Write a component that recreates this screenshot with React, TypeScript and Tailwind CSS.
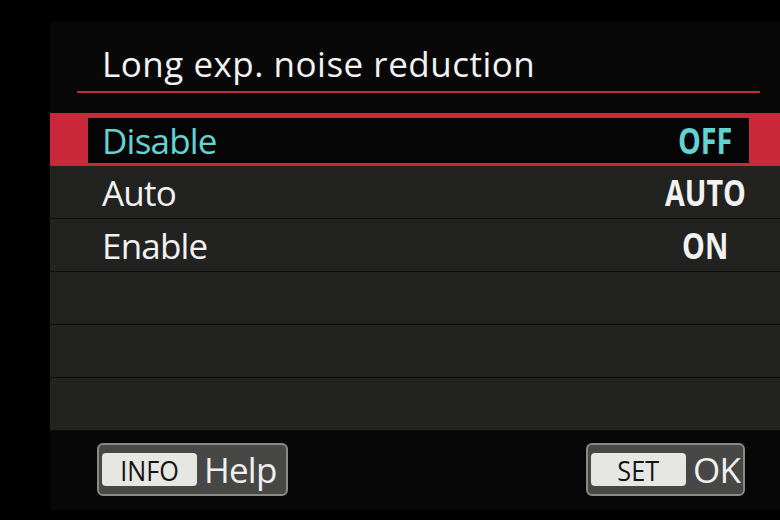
import React from "react";

const font = { fontFamily: '"Open Sans", "Noto Sans", sans-serif' };

function Value({ v, color }: { v?: string; color: string }) {
  return (
    <span className="w-[80px] flex justify-center">
      <span className={`inline-block scale-x-[0.82] text-[35px] leading-none font-bold ${color}`}>{v}</span>
    </span>
  );
}

function Row({ label, value, selected }: { label?: string; value?: string; selected?: boolean }) {
  if (selected) {
    return (
      <div className="h-[53px] bg-[#c9283b] flex items-start pt-[5px] pl-[38px] pr-[31px]">
        <div className="flex-1 h-[45px] bg-[#050505] flex items-center justify-between pl-[14px] pr-[4px]">
          <span className="text-[35px] leading-none font-medium text-[#63d2d2] tracking-[-0.8px]">{label}</span>
          <Value v={value} color="text-[#63d2d2]" />
        </div>
      </div>
    );
  }
  return (
    <div className="h-[53px] bg-[#222221] border-b border-[#0c0c0c] flex items-center justify-between pl-[52px] pr-[35px]">
      <span className="text-[35px] leading-none font-medium text-[#f2f2f2] tracking-[-0.8px]">{label}</span>
      <Value v={value} color="text-[#f2f2f2]" />
    </div>
  );
}

function Btn({ tag, text, tagW, width }: { tag: string; text: string; tagW: string; width: string }) {
  return (
    <div className={`h-[53px] ${width} rounded-[6px] border-2 border-[#8a8a85] bg-[#474745] flex items-center pl-[3px] gap-[7px]`}>
      <div className={`${tagW} h-[33px] rounded-[4px] bg-[#e6e6e2] flex items-center justify-center`}>
        <span className="inline-block scale-x-[0.9] text-[28px] leading-none font-medium text-[#141414]">{tag}</span>
      </div>
      <span className="text-[35px] leading-none font-medium text-[#f0f0f0] tracking-[-0.8px]">{text}</span>
    </div>
  );
}

export default function App() {
  return (
    <div className="w-[780px] h-[520px] bg-black overflow-hidden" style={font}>
      <div className="ml-[50px] mt-[22px] h-[488px] flex flex-col bg-[#070707]">
        <div className="h-[91px] bg-[#080808] flex flex-col pl-[27px] pr-[20px]">
          <div className="h-[69px] flex items-end pl-[25px] pb-[10px]">
            <span className="text-[35px] leading-none font-medium text-[#f2f2f2] tracking-[0.5px]">Long exp. noise reduction</span>
          </div>
          <div className="h-[2px] bg-[#c42739]" />
        </div>
        <div className="flex flex-col">
          <Row label="Disable" value="OFF" selected />
          <Row label="Auto" value="AUTO" />
          <Row label="Enable" value="ON" />
          <Row />
          <Row />
          <Row />
        </div>
        <div className="flex-1 flex items-start justify-between pt-[12px] pl-[47px] pr-[35px]">
          <Btn tag="INFO" text="Help" tagW="w-[95px]" width="w-[191px]" />
          <Btn tag="SET" text="OK" tagW="w-[95px]" width="w-[159px]" />
        </div>
      </div>
    </div>
  );
}
